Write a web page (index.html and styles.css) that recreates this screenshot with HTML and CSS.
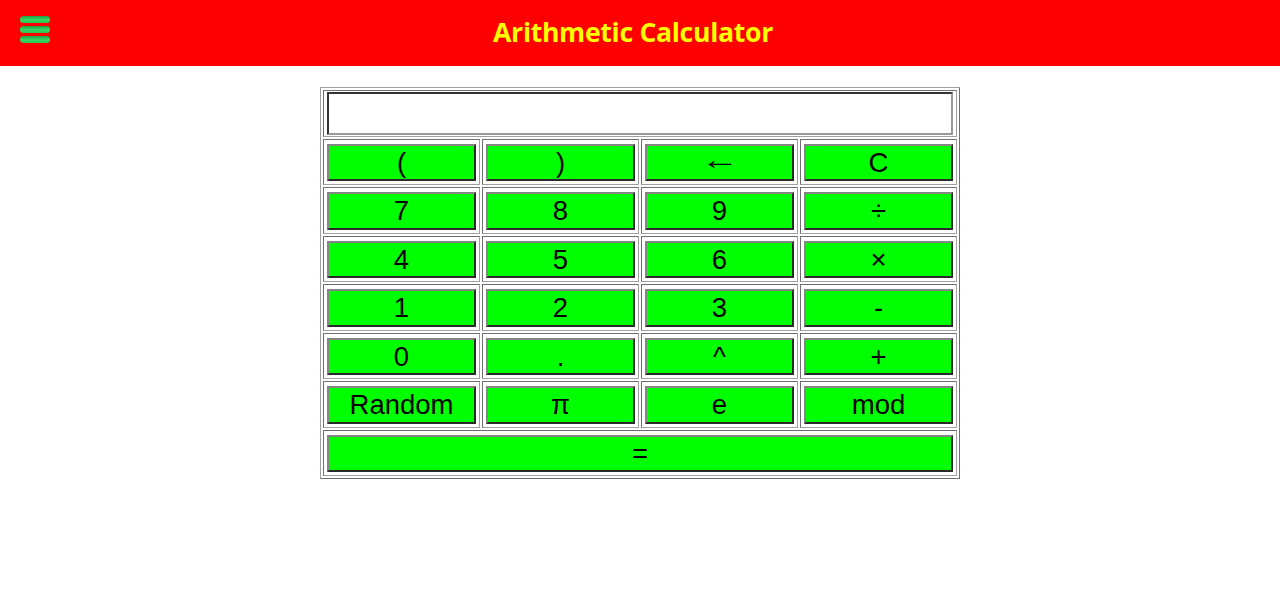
FILE: index.html
```html
<!DOCTYPE html>
<html>
<head>
<meta charset="utf-8">
<title>Arithmetic Calculator</title>
<link rel="stylesheet" href="styles.css">
</head>
<body>
<header class="topbar">
  <div class="menu-btn"><span></span><span></span><span></span></div>
  <h1 class="title">Arithmetic Calculator</h1>
</header>
<main class="calc">
  <div class="cell wide input-cell"><div class="display"></div></div>
  <div class="cell"><button class="key">(</button></div>
  <div class="cell"><button class="key">)</button></div>
  <div class="cell"><button class="key"><span class="arrow">←</span></button></div>
  <div class="cell"><button class="key">C</button></div>
  <div class="cell"><button class="key">7</button></div>
  <div class="cell"><button class="key">8</button></div>
  <div class="cell"><button class="key">9</button></div>
  <div class="cell"><button class="key">÷</button></div>
  <div class="cell"><button class="key">4</button></div>
  <div class="cell"><button class="key">5</button></div>
  <div class="cell"><button class="key">6</button></div>
  <div class="cell"><button class="key">×</button></div>
  <div class="cell"><button class="key">1</button></div>
  <div class="cell"><button class="key">2</button></div>
  <div class="cell"><button class="key">3</button></div>
  <div class="cell"><button class="key">-</button></div>
  <div class="cell"><button class="key">0</button></div>
  <div class="cell"><button class="key">.</button></div>
  <div class="cell"><button class="key">^</button></div>
  <div class="cell"><button class="key">+</button></div>
  <div class="cell"><button class="key">Random</button></div>
  <div class="cell"><button class="key">π</button></div>
  <div class="cell"><button class="key">e</button></div>
  <div class="cell"><button class="key">mod</button></div>
  <div class="cell wide"><button class="key">=</button></div>
</main>
</body>
</html>
```
FILE: styles.css
```css
html, body {
  margin: 0;
  padding: 0;
  background: #ffffff;
}
body {
  font-family: "Liberation Sans", Arial, sans-serif;
}
.topbar {
  height: 66px;
  background: #ff0000;
  display: flex;
  align-items: center;
  padding: 0 0 0 20px;
  box-sizing: border-box;
}
.menu-btn {
  width: 30px;
  display: flex;
  flex-direction: column;
  gap: 3px;
  margin-top: -7px;
}
.menu-btn span {
  display: block;
  height: 7px;
  border-radius: 4px;
  background: linear-gradient(#21a043, #35d862 55%, #2cc455);
}
.title {
  flex: 1;
  margin: 0;
  margin-top: -2px;
  padding-right: 64px;
  text-align: center;
  color: #ffff00;
  font-family: "Open Sans", sans-serif;
  font-weight: 700;
  font-size: 26.6px;
  letter-spacing: -0.3px;
  line-height: 1;
}
.calc {
  width: 640px;
  box-sizing: border-box;
  margin: 21px auto 0;
  border: 1px solid;
  border-color: #a0a0a0 #6f6f6f #6f6f6f #a0a0a0;
  padding: 2px;
  display: grid;
  grid-template-columns: repeat(4, 1fr);
  grid-auto-rows: 46.5px;
  gap: 2px;
}
.cell {
  border: 1px solid;
  border-color: #6f6f6f #a0a0a0 #a0a0a0 #6f6f6f;
  padding: 3px;
  box-sizing: border-box;
  display: flex;
}
.cell.wide {
  grid-column: 1 / -1;
}
.input-cell {
  padding: 1px 3px;
}
.display {
  flex: 1;
  background: #fff;
  border: 2px solid;
  border-color: #333 #999 #999 #333;
}
.key {
  flex: 1;
  margin: 0;
  margin-top: 1px;
  padding: 0;
  background: #00ff00;
  border: 2px solid;
  border-color: #858585 #2a2a2a #2a2a2a #858585;
  font-family: "Liberation Sans", Arial, sans-serif;
  font-size: 27.5px;
  color: #000;
  line-height: 1;
}
.arrow {
  display: inline-block;
  transform: translateY(-3px) scaleX(1.4);
}
```
